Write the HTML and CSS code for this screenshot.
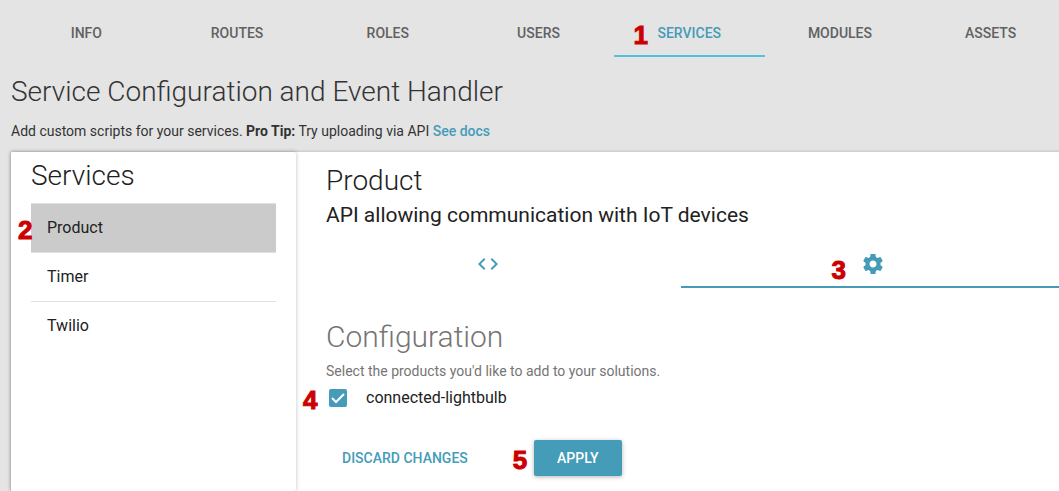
FILE: index.html
```html
<!DOCTYPE html>
<html lang="en">
<head>
<meta charset="utf-8">
<meta name="viewport" content="width=device-width, initial-scale=1">
<title>Service Configuration and Event Handler</title>
<link rel="stylesheet" href="styles.css">
</head>
<body>
<div class="page">
  <nav class="tabs">
    <a class="tab" href="#info">INFO</a>
    <a class="tab" href="#routes">ROUTES</a>
    <a class="tab" href="#roles">ROLES</a>
    <a class="tab" href="#users">USERS</a>
    <a class="tab tab-active" href="#services" aria-current="page"><span class="marked">SERVICES<span class="step step-tab">1</span></span></a>
    <a class="tab" href="#modules">MODULES</a>
    <a class="tab" href="#assets">ASSETS</a>
  </nav>
  <header class="intro">
    <h1 class="title">Service Configuration and Event Handler</h1>
    <p class="tip">Add custom scripts for your services. <strong>Pro Tip:</strong> Try uploading via API <a class="docs" href="#docs">See docs</a></p>
  </header>
  <div class="panel">
    <aside class="sidebar">
      <h2 class="title">Services</h2>
      <ul class="services">
        <li><button class="service service-selected" type="button">Product<span class="step step-service">2</span></button></li>
        <li><button class="service" type="button">Timer</button></li>
        <li><button class="service" type="button">Twilio</button></li>
      </ul>
    </aside>
    <main class="detail">
      <div class="summary">
        <h2 class="title">Product</h2>
        <p class="description">API allowing communication with IoT devices</p>
      </div>
      <div class="views">
        <button class="view" type="button" aria-label="Code">
          <svg class="icon" viewBox="0 0 24 24"><path d="M9.4 16.6L4.8 12l4.6-4.6L8 6l-6 6 6 6 1.400-1.400zm5.200 0l4.600-4.600-4.600-4.600L16 6l6 6-6 6-1.400-1.400z"/></svg>
        </button>
        <button class="view view-active" type="button" aria-label="Settings">
          <span class="marked">
            <svg class="icon" viewBox="0 0 24 24"><path d="M19.430 12.980c.04-.32.07-.64.07-.98s-.03-.66-.07-.98l2.110-1.650c.19-.15.24-.42.12-.64l-2-3.460c-.12-.22-.39-.3-.61-.22l-2.490 1c-.52-.4-1.080-.73-1.690-.98l-.38-2.650C14.460 2.180 14.250 2 14 2h-4c-.25 0-.46.18-.49.42l-.38 2.650c-.61.25-1.170.59-1.690.98l-2.490-1c-.23-.09-.49 0-.61.22l-2 3.460c-.13.22-.07.49.12.64l2.110 1.650c-.04.32-.07.65-.07.98s.03.66.07.98l-2.110 1.650c-.19.15-.24.42-.12.64l2 3.460c.12.22.39.3.61.22l2.490-1c.52.4 1.080.73 1.690.98l.38 2.650c.03.24.24.42.49.42h4c.25 0 .46-.18.49-.42l.38-2.650c.61-.25 1.170-.59 1.690-.98l2.490 1c.23.09.49 0 .61-.22l2-3.460c.12-.22.07-.49-.12-.64l-2.110-1.650zM12 15.500c-1.930 0-3.500-1.570-3.500-3.500s1.570-3.500 3.500-3.500 3.500 1.570 3.500 3.500-1.570 3.500-3.500 3.500z"/></svg>
            <span class="step step-view">3</span>
          </span>
        </button>
      </div>
      <form class="config">
        <h3 class="config-title">Configuration</h3>
        <p class="hint">Select the products you'd like to add to your solutions.</p>
        <div class="option">
          <span class="tick">
            <input class="tick-box" type="checkbox" id="lightbulb" checked>
            <svg class="tick-mark" viewBox="0 0 18 18"><path d="M3 9l4 4 8-8"/></svg>
          </span>
          <label for="lightbulb">connected-lightbulb</label>
          <span class="step step-option">4</span>
        </div>
        <div class="actions">
          <button class="button" type="reset">DISCARD CHANGES</button>
          <button class="button button-primary" type="button">APPLY<span class="step step-apply">5</span></button>
        </div>
      </form>
    </main>
  </div>
</div>
</body>
</html>
```
FILE: styles.css
```css
* { box-sizing: border-box; }

body {
  margin: 0;
  min-height: 100vh;
  display: flex;
  overflow: hidden;
  background: #e4e4e4;
  color: #212121;
  font: 14px/20px Roboto, "Liberation Sans", sans-serif;
}

h1, h2, h3, p, ul { margin: 0; padding: 0; }
button { border: 0; background: none; color: inherit; font: inherit; cursor: pointer; }

/* The layout runs slightly past the right edge of the window. */
.page {
  flex: 1;
  display: flex;
  flex-direction: column;
  margin: 9px -7px 0 11px;
}

.tabs { display: flex; }
.tab {
  flex: 1 1 0;
  height: 48px;
  border-bottom: 2px solid transparent;
  color: #616161;
  font-weight: 500;
  line-height: 48px;
  text-align: center;
  text-decoration: none;
}
.tab-active { border-color: #56c1dd; color: #449cb8; }
.marked { position: relative; display: inline-block; }

.intro { padding: 17px 0 11px; color: #333; }
.title { font-size: 28px; font-weight: 300; line-height: 36px; }
.tip { margin-top: 11px; }
.docs { color: #449cb8; font-weight: 500; text-decoration: none; }

.panel {
  flex: 1;
  display: flex;
  background: #fff;
  box-shadow: 0 0 3px rgba(0, 0, 0, .25);
}
.sidebar {
  flex: none;
  width: 285px;
  padding: 6px 20px;
  border-radius: 2px;
  box-shadow: 0 0 4px rgba(0, 0, 0, .25);
}
.services { margin-top: 9px; list-style: none; }
.service {
  position: relative;
  display: block;
  width: 100%;
  height: 49px;
  padding: 0 16px;
  border-top: 1px solid #e0e0e0;
  font-size: 16px;
  text-align: left;
}
.service-selected { background: #cbcbcb; }

.detail { flex: 1; }
.summary { padding: 11px 30px 0; }
.description { font-size: 21px; line-height: 32px; }
.views { display: flex; margin-top: 9px; }
.view {
  flex: 1 1 0;
  display: flex;
  justify-content: center;
  height: 48px;
  padding: 12px 2px 0 0;
  border-bottom: 2px solid transparent;
}
.view-active { border-color: #449cb8; }
.icon { display: block; width: 24px; height: 24px; fill: #449cb8; }

.config { padding: 29px 30px 15px; }
.config-title { color: #757575; font-size: 30px; font-weight: 300; line-height: 40px; }
.hint { margin-top: 4px; color: #757575; }
.option {
  position: relative;
  display: flex;
  align-items: center;
  gap: 19px;
  margin-top: 7px;
  padding-left: 3px;
  font-size: 16px;
}
.tick { position: relative; width: 18px; height: 18px; }
.tick-box {
  appearance: none;
  display: block;
  width: 18px;
  height: 18px;
  margin: 0;
  border: 2px solid #449cb8;
  border-radius: 2px;
}
.tick-box:checked { background: #449cb8; }
.tick-mark {
  position: absolute;
  inset: 0;
  fill: none;
  stroke: #fff;
  stroke-width: 2;
  pointer-events: none;
}
.tick-box:not(:checked) + .tick-mark { display: none; }

.actions { display: flex; gap: 50px; margin-top: 32px; }
.button {
  position: relative;
  height: 36px;
  padding: 0 16px;
  border-radius: 2px;
  color: #449cb8;
  font-weight: 500;
}
.button-primary {
  min-width: 88px;
  background: #449cb8;
  color: #fff;
  box-shadow: 0 1px 4px rgba(0, 0, 0, .3);
}

/* Numbered walkthrough markers laid over the controls. */
.step {
  position: absolute;
  color: #c00;
  font: bold 26px/30px "Liberation Sans", Arial, sans-serif;
  -webkit-text-stroke: 1px #c00;
}
.step-tab { top: 11px; left: -24px; }
.step-service { top: 11px; left: -13px; }
.step-view { top: 3px; left: -29px; }
.step-option { top: -3px; left: -23px; }
.step-apply { top: 5px; left: -21px; }
```
